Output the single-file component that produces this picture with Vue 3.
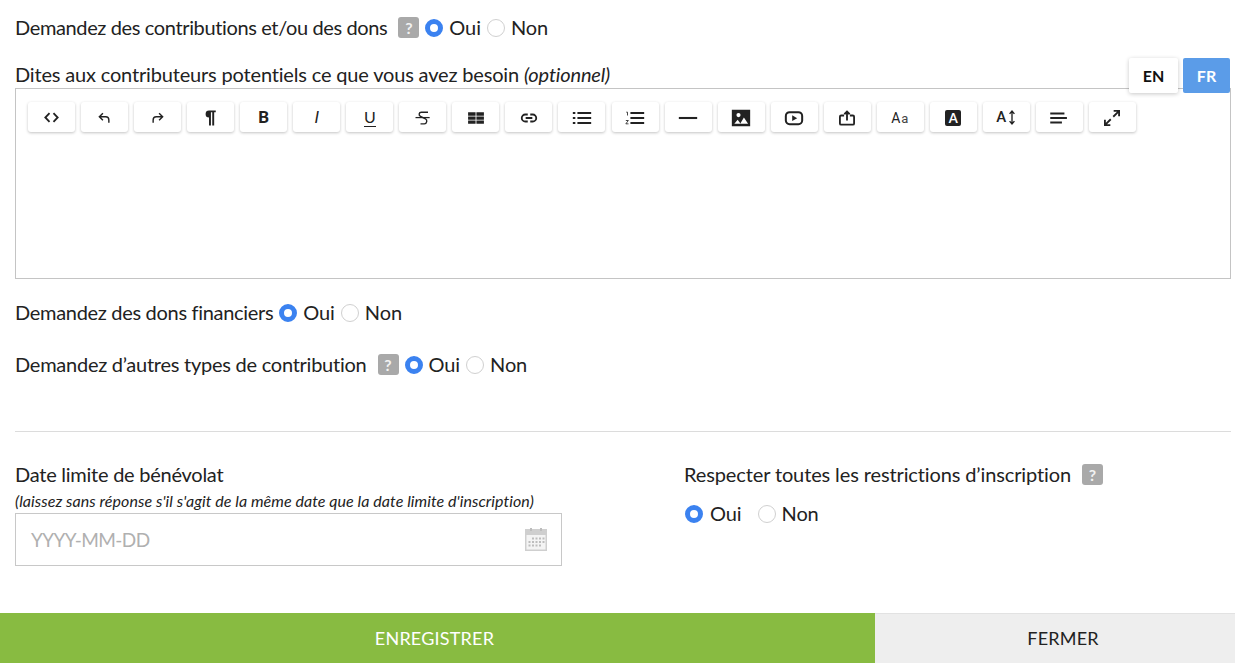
<script setup>
const tools = [
  { k: 'code' }, { k: 'undo' }, { k: 'redo' }, { k: 'para' }, { k: 'bold' }, { k: 'italic' },
  { k: 'under' }, { k: 'strike' }, { k: 'table' }, { k: 'link' }, { k: 'ul' }, { k: 'ol' },
  { k: 'hr' }, { k: 'image' }, { k: 'video' }, { k: 'upload' }, { k: 'aa' }, { k: 'abox' },
  { k: 'asize' }, { k: 'align' }, { k: 'full' }
]
</script>

<template>
  <div class="page">
    <main class="content">
      <div class="row first">
        <span class="label tightest">Demandez des contributions et/ou des dons</span>
        <span class="help">?</span>
        <span class="radio on"></span><span class="opt">Oui</span>
        <span class="radio"></span><span class="opt">Non</span>
      </div>

      <div class="editor-block">
        <div class="label editor-label loose">Dites aux contributeurs potentiels ce que vous avez besoin <em>(optionnel)</em></div>
        <div class="lang">
          <button class="lang-btn">EN</button>
          <button class="lang-btn active">FR</button>
        </div>
        <div class="editor">
          <div class="toolbar">
            <div v-for="t in tools" :key="t.k" class="tool">
              <svg v-if="t.k === 'code'" viewBox="0 0 24 24" class="ico"><path d="M9.5 6.500 4.200 12l5.300 5.500M14.500 6.500 19.800 12l-5.300 5.500" fill="none" stroke="#222" stroke-width="2.300"/></svg>
              <svg v-else-if="t.k === 'undo'" viewBox="0 0 24 24" class="ico"><path d="M10 6.500 5.500 11 10 15.500M6 11h7.500a4 4 0 0 1 4 4v3.500" fill="none" stroke="#222" stroke-width="1.800"/></svg>
              <svg v-else-if="t.k === 'redo'" viewBox="0 0 24 24" class="ico"><path d="M14 6.500 18.500 11 14 15.500M18 11h-7.500a4 4 0 0 0-4 4v3.500" fill="none" stroke="#222" stroke-width="1.800"/></svg>
              <svg v-else-if="t.k === 'para'" viewBox="0 0 24 24" class="ico para"><path d="M10.500 4H18v2h-1.800v15h-2.200V6h-1.500v15h-2.200v-9a4 4 0 0 1 .2-8z" fill="#222"/></svg>
              <span v-else-if="t.k === 'bold'" class="glyph bold">B</span>
              <span v-else-if="t.k === 'italic'" class="glyph ital">I</span>
              <span v-else-if="t.k === 'under'" class="glyph under">U</span>
              <svg v-else-if="t.k === 'strike'" viewBox="0 0 24 24" class="ico big"><path d="M18 5H10c-3 0-3.500 3.800-1 5l6 3c2.500 1.300 1.800 6-1.300 6H9" fill="none" stroke="#222" stroke-width="1.700"/><path d="M3 11.500h17" stroke="#222" stroke-width="1.500"/></svg>
              <svg v-else-if="t.k === 'table'" viewBox="0 0 24 24" class="ico big"><path d="M2.500 5h9v4.200h-9zM12.500 5h9v4.200h-9zM2.500 10.200h9v3.800h-9zM12.500 10.200h9v3.800h-9zM2.500 15h9v4h-9zM12.500 15h9v4h-9z" fill="#222"/></svg>
              <svg v-else-if="t.k === 'link'" viewBox="0 0 24 24" class="ico big"><path d="M10.500 7.800H7.500a4.200 4.200 0 0 0 0 8.400h3M13.500 7.800h3a4.200 4.200 0 0 1 0 8.400h-3M8 12h8" fill="none" stroke="#222" stroke-width="2.200"/></svg>
              <svg v-else-if="t.k === 'ul'" viewBox="0 0 24 24" class="ico big"><path d="M6.500 6H23M6.500 12H23M6.500 18H23" stroke="#222" stroke-width="2.300"/><path d="M1 6h3M1 12h3M1 18h3" stroke="#222" stroke-width="2.300"/></svg>
              <svg v-else-if="t.k === 'ol'" viewBox="0 0 24 24" class="ico big"><path d="M6.500 6H23M6.500 12H23M6.500 18H23" stroke="#222" stroke-width="2.300"/><path d="M1.500 5h1.500v4M1 15h3l-3 4h3.200" fill="none" stroke="#222" stroke-width="1"/></svg>
              <svg v-else-if="t.k === 'hr'" viewBox="0 0 24 24" class="ico big"><path d="M1 12h22" stroke="#222" stroke-width="2.500"/></svg>
              <svg v-else-if="t.k === 'image'" viewBox="0 0 24 24" class="ico big"><path fill-rule="evenodd" d="M1 2h22v20H1zM9 6a2.500 2.500 0 1 0 0 5 2.500 2.500 0 0 0 0-5zM8 14l-4 5h7.500zM15.500 11.500 11 19h9.500z" fill="#222"/></svg>
              <svg v-else-if="t.k === 'video'" viewBox="0 0 24 24" class="ico big"><rect x="2.200" y="5" width="19.600" height="14.500" rx="4.500" fill="none" stroke="#222" stroke-width="2.400"/><path d="m9.800 8.800 6 3.400-6 3.400z" fill="#222"/></svg>
              <svg v-else-if="t.k === 'upload'" viewBox="0 0 24 24" class="ico big"><path d="M8.500 9H5a1.500 1.500 0 0 0-1.500 1.500v8A1.500 1.500 0 0 0 5 20h14a1.500 1.500 0 0 0 1.500-1.500v-8A1.500 1.500 0 0 0 19 9h-3.500" fill="none" stroke="#222" stroke-width="2.200"/><path d="M12 15V4.500M8.800 7.500 12 4.200l3.200 3.300" fill="none" stroke="#222" stroke-width="2.200"/></svg>
              <span v-else-if="t.k === 'aa'" class="glyph aa">A<small>a</small></span>
              <span v-else-if="t.k === 'abox'" class="glyph abox">A</span>
              <span v-else-if="t.k === 'asize'" class="glyph asize">A<svg viewBox="0 0 10 20" class="updown"><path d="M5 2v16M2 5.500 5 2l3 3.500M2 14.500 5 18l3-3.500" fill="none" stroke="#222" stroke-width="1.700"/></svg></span>
              <svg v-else-if="t.k === 'align'" viewBox="0 0 24 24" class="ico big"><path d="M1.500 6.500h17M1.500 12h20M1.500 17.500h14" stroke="#222" stroke-width="2.400"/></svg>
              <svg v-else-if="t.k === 'full'" viewBox="0 0 24 24" class="ico big"><path d="M13.500 10.500 20 4M14 3.500H20.500V10M10.500 13.500 4 20M3.500 14V20.500H10" fill="none" stroke="#222" stroke-width="2.200"/></svg>
            </div>
          </div>
        </div>
      </div>

      <div class="row second">
        <span class="label tighter">Demandez des dons financiers</span>
        <span class="radio on"></span><span class="opt">Oui</span>
        <span class="radio"></span><span class="opt">Non</span>
      </div>

      <div class="row third">
        <span class="label">Demandez d’autres types de contribution</span>
        <span class="help">?</span>
        <span class="radio on"></span><span class="opt">Oui</span>
        <span class="radio"></span><span class="opt">Non</span>
      </div>

      <hr class="rule" />

      <div class="cols">
        <div class="col-left">
          <div class="label date-label">Date limite de bénévolat</div>
          <div class="hint">(laissez sans réponse s'il s'agit de la même date que la date limite d'inscription)</div>
          <div class="input">
            <span class="placeholder">YYYY-MM-DD</span>
            <svg viewBox="0 0 22 24" class="cal">
              <path d="M0 1h22v22H0z" fill="#cfcfcf"/>
              <path d="M1.500 7h19v14.500h-19z" fill="#f4f4f4"/>
              <path d="M5 0h2v3H5zM15 0h2v3h-2z" fill="#bdbdbd"/>
              <path d="M7 9.500h2v2H7zM10.500 9.500h2v2h-2zM14 9.500h2v2h-2zM17.500 9.500h2v2h-2zM3.500 13h2v2h-2zM7 13h2v2H7zM10.500 13h2v2h-2zM14 13h2v2h-2zM17.500 13h2v2h-2zM3.500 16.500h2v2h-2zM7 16.500h2v2H7zM10.500 16.500h2v2h-2zM14 16.500h2v2h-2z" fill="#bdbdbd"/>
            </svg>
          </div>
        </div>
        <div class="col-right">
          <div class="right-head">
            <span class="label loosest">Respecter toutes les restrictions d’inscription</span>
            <span class="help">?</span>
          </div>
          <div class="right-opts">
            <span class="radio on flush"></span><span class="opt wide">Oui</span>
            <span class="radio"></span><span class="opt">Non</span>
          </div>
        </div>
      </div>
    </main>

    <footer class="footer">
      <button class="save">ENREGISTRER</button>
      <button class="close">FERMER</button>
    </footer>
  </div>
</template>

<style scoped>
.page {
  width: 1235px;
  height: 663px;
  display: flex;
  flex-direction: column;
  overflow: hidden;
  background: #fff;
  font-family: Lato, "Liberation Sans", sans-serif;
  color: #222;
}
.content {
  flex: 1;
  padding: 0 4px 0 15px;
}
.row {
  display: flex;
  align-items: center;
  height: 28px;
}
.first { margin-top: 13px; }
.second { margin-top: 19px; }
.third { margin-top: 24px; }
.label {
  font-size: 20px;
  line-height: 28px;
  letter-spacing: -0.25px;
  white-space: nowrap;
}
.tightest { letter-spacing: -0.37px; }
.tighter { letter-spacing: -0.31px; }
.loose { letter-spacing: -0.17px; }
.loosest { letter-spacing: -0.12px; }
.help {
  display: inline-flex;
  align-items: center;
  justify-content: center;
  width: 21px;
  height: 21px;
  margin-left: 11px;
  border-radius: 3px;
  background: #a9a9a9;
  color: #f2f2f2;
  font-size: 16px;
  font-weight: 700;
}
.radio {
  width: 18px;
  height: 18px;
  box-sizing: border-box;
  border-radius: 50%;
  border: 1px solid #d0d0d0;
  background: #fff;
  margin: 2px 6px 0 6px;
  flex: none;
}
.radio.on {
  border: 5.500px solid #3b82f0;
}
.radio.flush { margin-left: 1px; margin-right: 7px; }
.opt {
  font-size: 20px;
  line-height: 28px;
  letter-spacing: -0.1px;
}
.opt.wide { margin-right: 10px; }
.editor-block {
  position: relative;
  margin-top: 19px;
}
.editor-label { height: 28px; }
.editor-label em { font-style: italic; }
.lang {
  position: absolute;
  right: 1px;
  top: -2px;
  display: flex;
  gap: 5px;
}
.lang-btn {
  width: 49px;
  height: 35px;
  border: 0;
  border-radius: 2px;
  background: #fff;
  box-shadow: 0 1px 4px rgba(0,0,0,.22);
  font: 700 16px Lato, sans-serif;
  color: #111;
  padding: 0;
}
.lang-btn.active {
  width: 47px;
  background: #5b9ce8;
  color: #fff;
  box-shadow: none;
}
.editor {
  box-sizing: border-box;
  height: 191px;
  border: 1px solid #c4c4c4;
  padding: 13px 12px;
}
.toolbar {
  display: flex;
  gap: 6.05px;
}
.tool {
  width: 47px;
  height: 30px;
  flex: none;
  display: flex;
  align-items: center;
  justify-content: center;
  background: #fff;
  border-radius: 3px;
  box-shadow: 0 1px 3px rgba(0,0,0,.24);
}
.ico { width: 19px; height: 19px; margin-top: 1px; }
.ico.big { width: 20px; height: 20px; }
.ico.para { width: 21px; height: 21px; }
.glyph { color: #222; font-size: 16px; line-height: 1; margin-top: 1px; }
.bold { font-weight: 700; font-size: 17px; font-family: Roboto, sans-serif; }
.ital { font-style: italic; font-size: 17px; font-family: Roboto, sans-serif; }
.under { font-size: 16px; border-bottom: 1.500px solid #222; padding-bottom: 1px; }
.aa { font-size: 14px; font-family: Roboto, sans-serif; letter-spacing: 1px; }
.aa small { font-size: 13px; color: #444; }
.abox {
  width: 16px;
  height: 16px;
  background: #222;
  color: #fff;
  border-radius: 2px;
  font-size: 13px;
  font-weight: 700;
  text-align: center;
  line-height: 16px;
}
.asize {
  display: flex;
  align-items: center;
  font-size: 15px;
  font-weight: 500;
  font-family: Roboto, sans-serif;
}
.updown { width: 8px; height: 17px; margin-left: 2px; }
.rule {
  border: 0;
  border-top: 1px solid #dcdcdc;
  margin: 53px 0 0;
}
.cols {
  display: flex;
  margin-top: 28px;
}
.col-left { width: 669px; }
.date-label { height: 28px; }
.hint {
  font-size: 16px;
  line-height: 20px;
  font-style: italic;
  margin-top: 3px;
  letter-spacing: 0.06px;
  white-space: nowrap;
}
.input {
  box-sizing: border-box;
  width: 547px;
  height: 53px;
  margin-top: 2px;
  border: 1px solid #c8c8c8;
  display: flex;
  align-items: center;
  justify-content: space-between;
  padding: 0 14px 0 15px;
}
.placeholder { color: #b0b0b0; font-size: 19px; letter-spacing: -0.6px; }
.cal { width: 22px; height: 24px; }
.right-head { display: flex; align-items: center; height: 28px; }
.right-opts { display: flex; align-items: center; height: 28px; margin-top: 11px; }
.footer {
  height: 50px;
  display: flex;
  flex: none;
}
.save, .close {
  border: 0;
  font: 400 18px Lato, sans-serif;
  letter-spacing: 0.2px;
}
.save {
  width: 875px;
  padding: 0 6px 0 0;
  background: #88bb41;
  color: #fff;
}
.close {
  flex: 1;
  padding: 0 0 0 16px;
  background: #eeeeee;
  color: #222;
  box-shadow: inset 0 1px 0 #e2e2e2;
}
</style>
